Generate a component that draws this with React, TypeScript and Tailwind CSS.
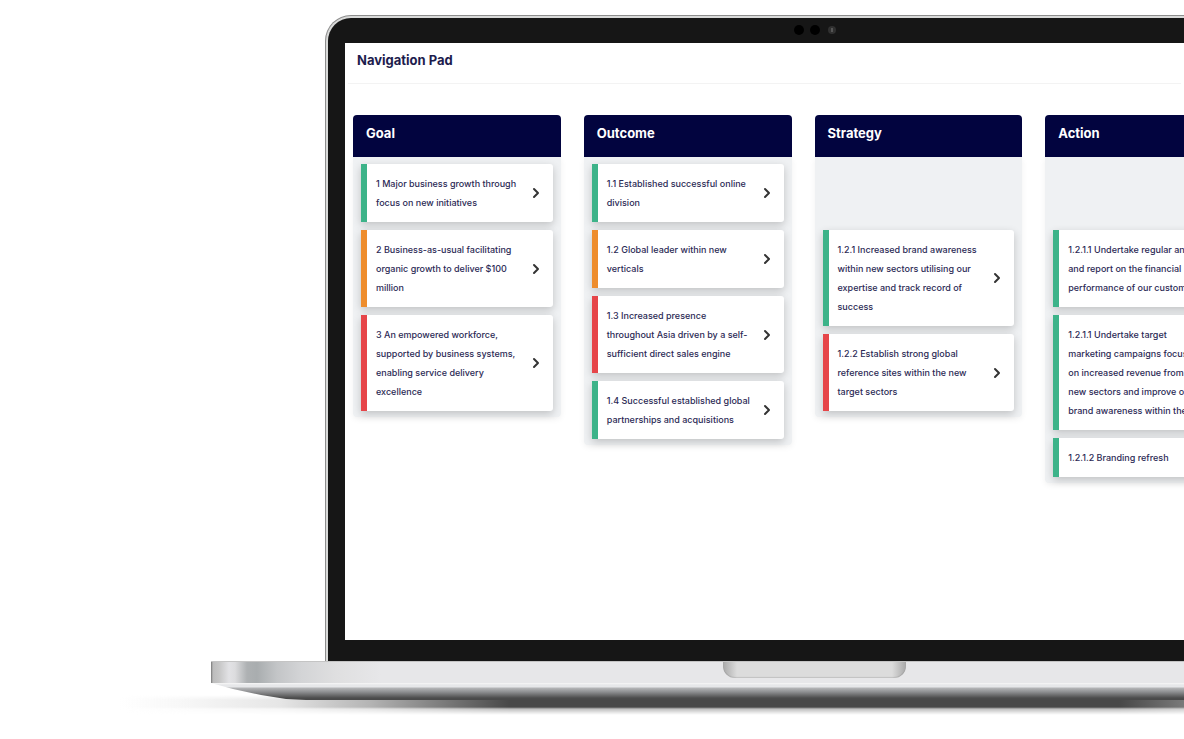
import { ChevronRight } from "lucide-react";

type Status = "green" | "orange" | "red";

interface Card {
  status: Status;
  lines: string[];
}

interface Column {
  title: string;
  indented?: boolean;
  cards: Card[];
}

const barColors: Record<Status, string> = {
  green: "border-[#3db389]",
  orange: "border-[#ee8d2d]",
  red: "border-[#e64549]",
};

const columns: Column[] = [
  {
    title: "Goal",
    cards: [
      {
        status: "green",
        lines: ["1 Major business growth through", "focus on new initiatives"],
      },
      {
        status: "orange",
        lines: [
          "2 Business-as-usual facilitating",
          "organic growth to deliver $100",
          "million",
        ],
      },
      {
        status: "red",
        lines: [
          "3 An empowered workforce,",
          "supported by business systems,",
          "enabling service delivery",
          "excellence",
        ],
      },
    ],
  },
  {
    title: "Outcome",
    cards: [
      {
        status: "green",
        lines: ["1.1 Established successful online", "division"],
      },
      {
        status: "orange",
        lines: ["1.2 Global leader within new", "verticals"],
      },
      {
        status: "red",
        lines: [
          "1.3 Increased presence",
          "throughout Asia driven by a self-",
          "sufficient direct sales engine",
        ],
      },
      {
        status: "green",
        lines: [
          "1.4 Successful established global",
          "partnerships and acquisitions",
        ],
      },
    ],
  },
  {
    title: "Strategy",
    indented: true,
    cards: [
      {
        status: "green",
        lines: [
          "1.2.1 Increased brand awareness",
          "within new sectors utilising our",
          "expertise and track record of",
          "success",
        ],
      },
      {
        status: "red",
        lines: [
          "1.2.2 Establish strong global",
          "reference sites within the new",
          "target sectors",
        ],
      },
    ],
  },
  {
    title: "Action",
    indented: true,
    cards: [
      {
        status: "green",
        lines: [
          "1.2.1.1 Undertake regular analysis",
          "and report on the financial",
          "performance of our customers",
        ],
      },
      {
        status: "green",
        lines: [
          "1.2.1.1 Undertake target",
          "marketing campaigns focused",
          "on increased revenue from",
          "new sectors and improve our",
          "brand awareness within them",
        ],
      },
      { status: "green", lines: ["1.2.1.2 Branding refresh"] },
    ],
  },
];

function PadCard({ card }: { card: Card }) {
  return (
    <button
      type="button"
      className={`flex w-full items-center rounded-r-[3px] border-l-6 bg-white py-[10px] pr-[9px] pl-[9px] text-left shadow-[0_3px_8px_rgba(0,0,0,0.2)] ${barColors[card.status]}`}
    >
      <span className="min-w-0 flex-1 text-[9px] leading-[19px] font-medium whitespace-nowrap text-[#2c2a55]">
        {card.lines.map((line) => (
          <span key={line} className="block">
            {line}
          </span>
        ))}
      </span>
      <ChevronRight
        size={16}
        strokeWidth={3}
        className="shrink-0 text-[#333333]"
      />
    </button>
  );
}

function PadColumn({ column }: { column: Column }) {
  return (
    <section className="min-w-0">
      <h2 className="flex h-[42px] items-center rounded-t-[4px] bg-[#02043f] px-[13px] pb-1 text-[13px] font-bold text-white">
        {column.title}
      </h2>
      <div
        className={`flex flex-col gap-2 rounded-b-[4px] bg-[#eff1f3] px-2 pb-[6px] shadow-[0_2px_6px_rgba(0,0,0,0.06)] ${
          column.indented ? "pt-[73px]" : "pt-[7px]"
        }`}
      >
        {column.cards.map((card) => (
          <PadCard key={card.lines[0]} card={card} />
        ))}
      </div>
    </section>
  );
}

function Camera() {
  return (
    <div className="flex h-[25px] items-center justify-center gap-[6px] pb-[2px]">
      <span className="size-[10px] rounded-full bg-black" />
      <span className="size-[10px] rounded-full bg-black" />
      <span className="ml-[2px] flex size-[8px] items-center justify-center rounded-full bg-[#303030]">
        <span className="h-1 w-[2px] bg-[#555555]" />
      </span>
    </div>
  );
}

function LaptopBase() {
  return (
    <div>
      <div className="flex h-[22px] justify-center border-t border-[#c4c4c4] bg-[linear-gradient(90deg,#777_0px,#bcbcbc_2px,#c6c6c6_8px,#e2e2e5_18px,#dcdcde_24px,#aeb1b3_36px,#a9adaf_46px,#c3c5c7_66px,#d3d4d6_90px,#dfdfe0_125px,#e7e7e9_170px,#e7e7e9_100%)]">
        <div className="h-[16px] w-[183px] rounded-b-[12px] bg-[linear-gradient(90deg,#a9a9a9,#c6c6c6_8px,#dcdcdc_14px,#dcdcdc_calc(100%-14px),#c6c6c6_calc(100%-8px),#a9a9a9)] shadow-[inset_0_-1px_1px_rgba(0,0,0,0.12)]" />
      </div>
      <div className="relative z-10 h-[17px] bg-[linear-gradient(180deg,#f7f7f7_0px,#e6e7e9_2px,#e6e7e9_4px,#b4b5b7_5px,#8d8e90_9px,#4c4c4c_15px,#484848_17px)] [clip-path:polygon(0_0,100%_0,calc(100%-22px)_6px,calc(100%-50px)_12px,calc(100%-75px)_16px,calc(100%-95px)_100%,95px_100%,75px_16px,50px_12px,22px_6px)]" />
      <div className="-mx-[91px] -mt-[5px] h-[20px] bg-[linear-gradient(90deg,transparent,#f6f6f6_70px,#e6e6e6_160px,#b4b4b4_250px,#858585_310px,#484848_390px,#484848_calc(100%-390px),#858585_calc(100%-310px),#b4b4b4_calc(100%-250px),transparent)] [mask-image:linear-gradient(180deg,transparent,black_5px,black_12px,rgba(0,0,0,0.35)_14px,rgba(0,0,0,0.1)_18px,transparent)]" />
    </div>
  );
}

export default function App() {
  return (
    <div className="min-h-screen overflow-hidden bg-white pt-[15px] font-['Inter','Open_Sans',sans-serif]">
      <div className="-mr-[234px] ml-[211px]">
        <div className="mx-[114px] rounded-t-[26px] border-x border-t border-[#8d8d8d] bg-[#d9dad9] px-[2px] pt-[2px]">
          <div className="rounded-t-[23px] bg-[#161616] px-[17px] pb-[21px]">
            <Camera />
            <main className="min-h-[597px] bg-white">
              <header className="mr-[103px] ml-[3px] flex h-[41px] items-center border-b border-[#f3f3f3] px-[9px] pb-1">
                <h1 className="text-[13px] font-bold text-[#1d1c4d]">
                  Navigation Pad
                </h1>
              </header>
              <div className="grid grid-cols-4 items-start gap-[23px] pt-[31px] pr-[31px] pl-2">
                {columns.map((column) => (
                  <PadColumn key={column.title} column={column} />
                ))}
              </div>
            </main>
          </div>
        </div>
        <LaptopBase />
      </div>
    </div>
  );
}
